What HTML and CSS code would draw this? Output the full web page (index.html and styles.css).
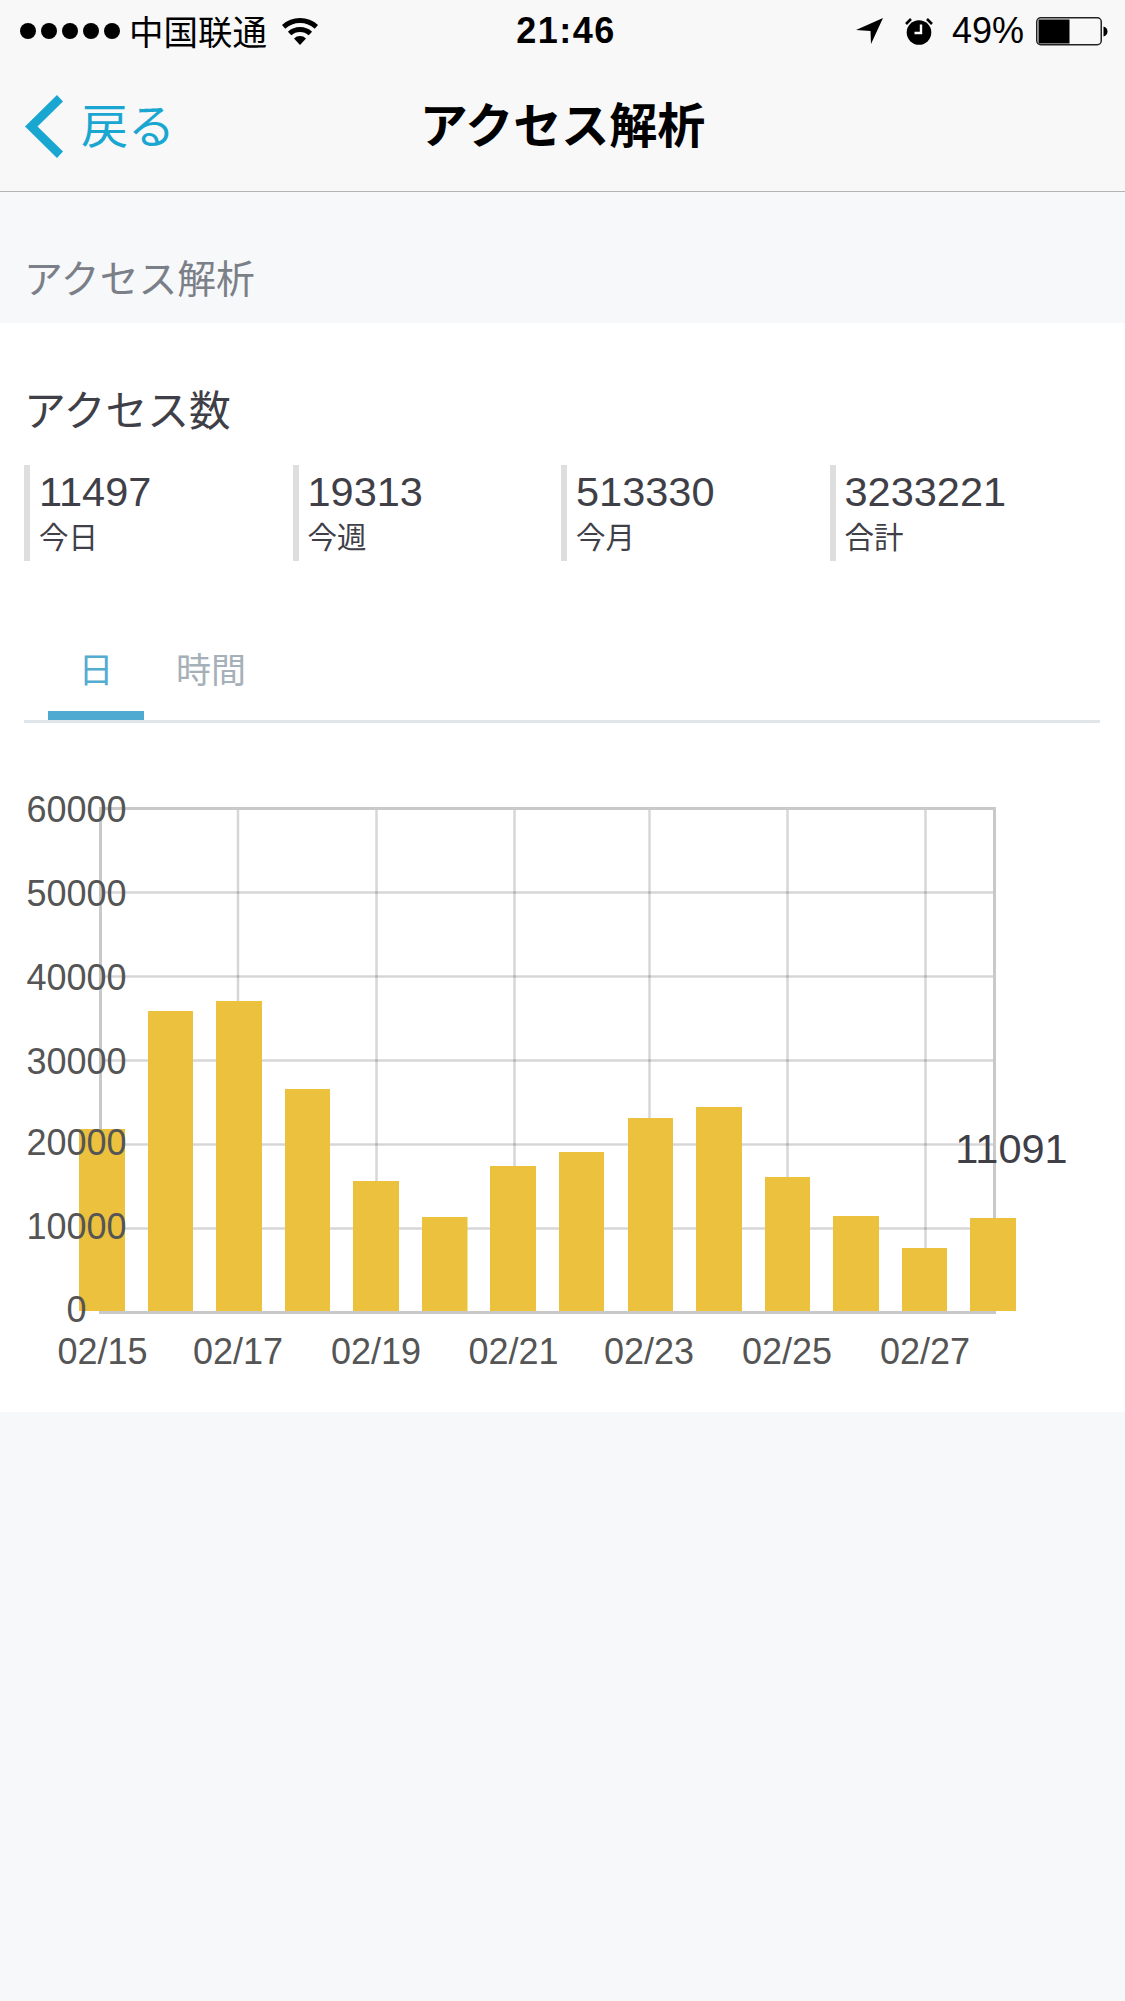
FILE: index.html
```html
<!DOCTYPE html>
<html lang="ja">
<head>
  <meta charset="UTF-8">
  <meta name="viewport" content="width=device-width, initial-scale=1.0">
  <link rel="stylesheet" href="styles.css">
  <title>アクセス解析</title>
</head>
<body>
  <header class="header">
    <div class="status-bar">
      <div class="status-left">
        <div class="signal"><span></span><span></span><span></span><span></span><span></span></div>
        <span class="carrier">中国联通</span>
        <svg class="wifi" width="36" height="27" viewBox="0 0 36 27">
          <path d="M1.6 8.8A24.5 24.5 0 0 1 34.4 8.8" fill="none" stroke="#000" stroke-width="5"/>
          <path d="M7.6 15.5A15.5 15.5 0 0 1 28.4 15.5" fill="none" stroke="#000" stroke-width="5"/>
          <path d="M18 27L12 20.5A8.5 8.5 0 0 1 24 20.5Z" fill="#000"/>
        </svg>
      </div>
      <div class="clock">21:46</div>
      <div class="status-right">
        <svg class="location" width="27" height="26" viewBox="0 0 27 26">
          <path d="M27 0L0 12L14.5 13L15 26Z" fill="#000"/>
        </svg>
        <svg class="alarm" width="30" height="28" viewBox="0 0 30 28">
          <circle cx="15" cy="15.5" r="12.3" fill="#000"/>
          <path d="M17 7.5V16H10.5" fill="none" stroke="#fff" stroke-width="2.4"/>
          <path d="M2 7L7 2M28 7L23 2" fill="none" stroke="#000" stroke-width="2.6"/>
        </svg>
        <span class="battery-text">49%</span>
        <svg class="battery" width="72" height="29" viewBox="0 0 72 29">
          <rect x="0.75" y="0.75" width="64.5" height="27" rx="4" fill="none" stroke="#222" stroke-width="1.5"/>
          <rect x="2.5" y="2.5" width="31" height="24" fill="#000"/>
          <path d="M67.5 9.5C70 10 71.5 12 71.5 14.5C71.5 17 70 19 67.5 19.5Z" fill="#000"/>
        </svg>
      </div>
    </div>
    <nav class="nav">
      <a class="back">
        <svg class="chevron" width="38" height="63" viewBox="0 0 38 63">
          <path d="M0 31.5L32 0L38 6.5L12.5 31.5L38 56.5L32 63Z" fill="#19a7d2"/>
        </svg>
        <span>戻る</span>
      </a>
      <div class="nav-title">アクセス解析</div>
    </nav>
  </header>

  <div class="section-title">アクセス解析</div>

  <main class="card">
    <h2 class="card-title">アクセス数</h2>
    <div class="stats">
      <div class="stat"><div class="stat-value">11497</div><div class="stat-label">今日</div></div>
      <div class="stat"><div class="stat-value">19313</div><div class="stat-label">今週</div></div>
      <div class="stat"><div class="stat-value">513330</div><div class="stat-label">今月</div></div>
      <div class="stat"><div class="stat-value">3233221</div><div class="stat-label">合計</div></div>
    </div>

    <div class="tabs">
      <div class="tab active">日</div>
      <div class="tab">時間</div>
    </div>

    <svg class="chart" width="1076" height="689" viewBox="24 723 1076 689">
      <g class="grid">
        <path d="M100 892.4H995M100 976.4H995M100 1060.4H995M100 1144.4H995M100 1228.4H995"/>
        <path d="M238 809V1311M376.5 809V1311M514.5 809V1311M649.5 809V1311M787.5 809V1311M925.5 809V1311"/>
      </g>
      <g class="frame">
        <path d="M99 808.5H996M100.5 808V1311M994.5 808V1311M99 1312.5H996"/>
      </g>
      <g class="bars">
        <rect x="79" y="1129" width="46" height="182"/>
        <rect x="148" y="1011" width="45" height="300"/>
        <rect x="216" y="1001" width="46" height="310"/>
        <rect x="285" y="1089" width="45" height="222"/>
        <rect x="353" y="1181" width="46" height="130"/>
        <rect x="422" y="1217" width="45.500" height="94"/>
        <rect x="490" y="1166" width="46" height="145"/>
        <rect x="559" y="1152" width="45" height="159"/>
        <rect x="628" y="1118" width="45" height="193"/>
        <rect x="696" y="1107" width="46" height="204"/>
        <rect x="765" y="1177" width="45" height="134"/>
        <rect x="833" y="1216" width="46" height="95"/>
        <rect x="902" y="1248" width="45" height="63"/>
        <rect x="970" y="1218" width="46" height="93"/>
      </g>
      <g class="axis-y">
        <text x="76.500" y="822">60000</text>
        <text x="76.500" y="906">50000</text>
        <text x="76.500" y="990">40000</text>
        <text x="76.500" y="1074">30000</text>
        <text x="76.500" y="1155">20000</text>
        <text x="76.500" y="1239">10000</text>
        <text x="76.500" y="1322">0</text>
      </g>
      <g class="axis-x">
        <text x="102.500" y="1364">02/15</text>
        <text x="238" y="1364">02/17</text>
        <text x="376" y="1364">02/19</text>
        <text x="513.500" y="1364">02/21</text>
        <text x="649" y="1364">02/23</text>
        <text x="787" y="1364">02/25</text>
        <text x="925" y="1364">02/27</text>
      </g>
      <text class="bar-label" x="1011.500" y="1163">11091</text>
    </svg>
  </main>
</body>
</html>
```

FILE: styles.css
```css
body {
  font-family: "Liberation Sans", "Noto Sans CJK JP", sans-serif;
  margin: 0;
  padding: 0;
  min-height: 2001px;
  background-color: #f7f8fa;
  color: #3f4047;
}

.header {
  background-color: #f8f8f8;
  border-bottom: 1px solid #b2b2b2;
}

.status-bar {
  display: grid;
  grid-template-columns: 1fr auto 1fr;
  align-items: center;
  height: 62px;
  padding: 0 17px 0 20px;
  color: #000;
}

.status-left,
.status-right {
  display: flex;
  align-items: center;
}

.status-right {
  justify-content: flex-end;
}

.signal {
  display: flex;
  gap: 5px;
}

.signal span {
  width: 16px;
  height: 16px;
  border-radius: 50%;
  background-color: #000;
}

.carrier {
  font-family: "Noto Sans CJK SC", sans-serif;
  font-size: 34.500px;
  line-height: 38px;
  margin-left: 9px;
  padding-bottom: 2px;
}

.wifi {
  margin-left: 15px;
}

.clock {
  font-size: 36px;
  font-weight: bold;
  letter-spacing: 1.500px;
  margin-left: 4px;
}

.alarm {
  margin-left: 21px;
}

.battery-text {
  font-size: 36px;
  margin-left: 18px;
}

.battery {
  margin-left: 12px;
}

.nav {
  display: grid;
  grid-template-columns: 1fr auto 1fr;
  align-items: center;
  height: 129px;
  padding-left: 25px;
  padding-right: 25px;
}

.back {
  display: flex;
  align-items: center;
  font-size: 47px;
  color: #19a7d2;
}

.back span {
  margin-left: 18px;
  line-height: 60px;
}

.nav-title {
  font-size: 48px;
  font-weight: bold;
  line-height: 60px;
  color: #000;
}

.section-title {
  height: 131px;
  padding: 0 24px 23px;
  box-sizing: border-box;
  display: flex;
  align-items: flex-end;
  font-size: 38.800px;
  line-height: 40px;
  color: #7b7f88;
}

.card {
  background-color: #fff;
  height: 1089px;
  box-sizing: border-box;
  padding: 59px 25px 0 24px;
}

.card-title {
  font-size: 41.800px;
  font-weight: normal;
  line-height: 60px;
  margin: 0 0 23px;
}

.stats {
  display: grid;
  grid-template-columns: repeat(4, 1fr);
  margin-right: 2px;
}

.stat {
  height: 96px;
  border-left: 6px solid #dedede;
  padding-left: 9px;
}

.stat-value {
  font-size: 41.500px;
  line-height: 54px;
}

.stat-label {
  font-size: 29.500px;
  line-height: 38px;
}

.tabs {
  display: flex;
  margin-top: 86px;
  border-bottom: 3px solid #dfe5e8;
}

.tab {
  font-size: 35px;
  line-height: 48px;
  padding: 0 32px 16px;
  border-bottom: 9px solid transparent;
  color: #a5b0b8;
}

.tab.active {
  width: 96px;
  box-sizing: border-box;
  margin-left: 24px;
  padding: 0 0 16px;
  text-align: center;
  border-bottom-color: #4faad1;
  color: #55acd1;
}

.chart {
  display: block;
}

.grid path {
  fill: none;
  stroke: rgba(0, 0, 0, 0.16);
  stroke-width: 2.500;
}

.frame path {
  fill: none;
  stroke: #c9c9c9;
  stroke-width: 3;
}

.bars rect {
  fill: #ebc13e;
}

.axis-y text,
.axis-x text {
  font-size: 36px;
  fill: #555;
  text-anchor: middle;
}

.bar-label {
  font-size: 41.500px;
  fill: #3f4047;
  text-anchor: middle;
}
```
